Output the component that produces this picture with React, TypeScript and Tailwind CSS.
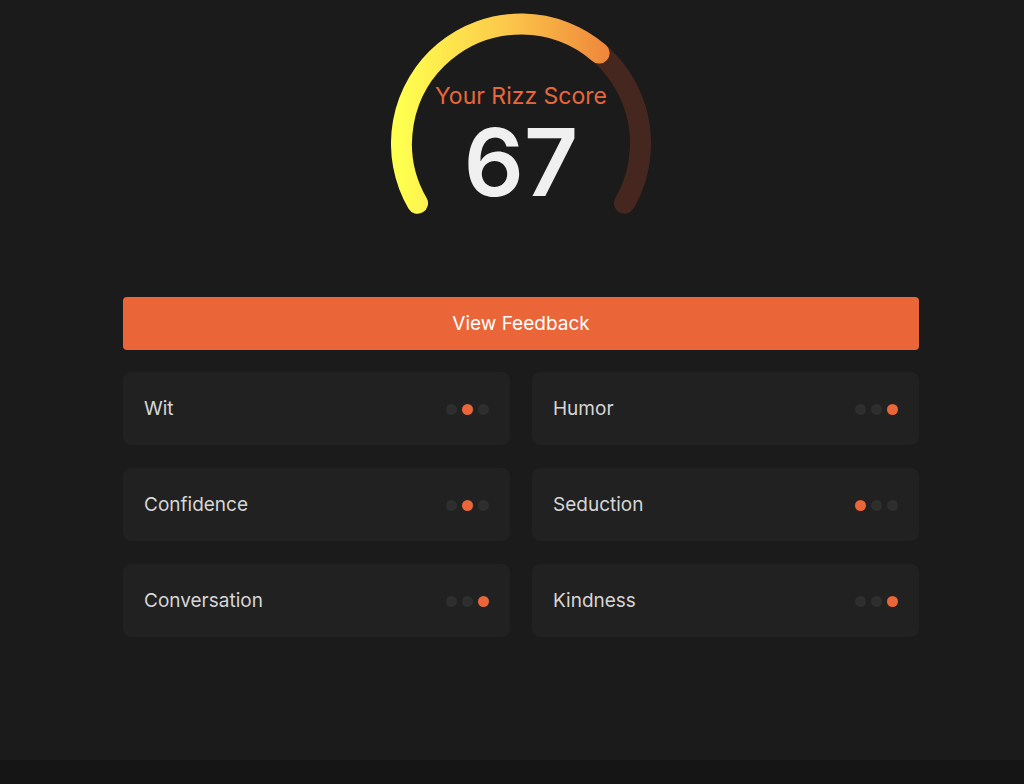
const traits = [
  { name: 'Wit', level: 2 },
  { name: 'Humor', level: 3 },
  { name: 'Confidence', level: 2 },
  { name: 'Seduction', level: 1 },
  { name: 'Conversation', level: 3 },
  { name: 'Kindness', level: 3 },
];

function Gauge({ score }: { score: number }) {
  const cx = 130;
  const cy = 143.5;
  const r = 119.5;
  const start = 210;
  const sweep = 240;
  const pt = (deg: number) => {
    const a = (deg * Math.PI) / 180;
    return [cx + r * Math.cos(a), cy - r * Math.sin(a)];
  };
  const [sx, sy] = pt(start);
  const [ex, ey] = pt(start - sweep);
  const [px, py] = pt(start - (sweep * score) / 100);
  const large = (sweep * score) / 100 > 180 ? 1 : 0;

  return (
    <div className="relative h-[230px] w-[260px]">
      <svg width="260" height="230" viewBox="0 0 260 230" className="absolute left-0 top-0">
        <defs>
          <linearGradient id="arc" gradientUnits="userSpaceOnUse" x1="10" y1="0" x2="220" y2="0">
            <stop offset="0" stopColor="#ffff4f" />
            <stop offset="0.5" stopColor="#fcc84a" />
            <stop offset="1" stopColor="#ee853b" />
          </linearGradient>
        </defs>
        <path
          d={`M${sx} ${sy} A${r} ${r} 0 1 1 ${ex} ${ey}`}
          fill="none"
          stroke="#45271f"
          strokeWidth="21"
          strokeLinecap="round"
        />
        <path
          d={`M${sx} ${sy} A${r} ${r} 0 ${large} 1 ${px} ${py}`}
          fill="none"
          stroke="url(#arc)"
          strokeWidth="21"
          strokeLinecap="round"
        />
      </svg>
      <div className="absolute inset-x-0 top-[85px] text-center text-[23px] leading-none text-[#e8673a]">
        Your Rizz Score
      </div>
      <div className="absolute inset-x-0 top-[115px] text-center text-[94px] font-semibold leading-none text-[#f0f0f0]">
        {score}
      </div>
    </div>
  );
}

function Dots({ level }: { level: number }) {
  return (
    <div className="flex items-center gap-[5px]">
      {[1, 2, 3].map(i => (
        <span
          key={i}
          className={
            i === level
              ? 'h-[11px] w-[11px] rounded-full bg-[#ea6639]'
              : 'h-[11px] w-[11px] rounded-full bg-[#2e2e2e]'
          }
        />
      ))}
    </div>
  );
}

export default function App() {
  return (
    <div className="h-[784px] bg-[#151515]" style={{ fontFamily: 'Inter, "Noto Sans", sans-serif' }}>
      <div className="h-[760px] bg-[#1b1b1b] pl-[123px]">
        <div className="flex w-[796px] flex-col items-center">
          <Gauge score={67} />
          <button
            type="button"
            className="mt-[67px] h-[53px] w-full rounded-[4px] bg-[#ea6639] pt-[1px] text-[19px] text-white"
          >
            View Feedback
          </button>
          <div className="mt-[22px] grid w-full grid-cols-2 gap-x-[22px] gap-y-[23px]">
            {traits.map(t => (
              <div
                key={t.name}
                className="flex h-[73px] items-center justify-between rounded-[8px] bg-[#212121] pl-[21px] pr-[21px] pt-[1px]"
              >
                <span className="text-[19px] text-[#d6d6d6]">{t.name}</span>
                <Dots level={t.level} />
              </div>
            ))}
          </div>
        </div>
      </div>
    </div>
  );
}
